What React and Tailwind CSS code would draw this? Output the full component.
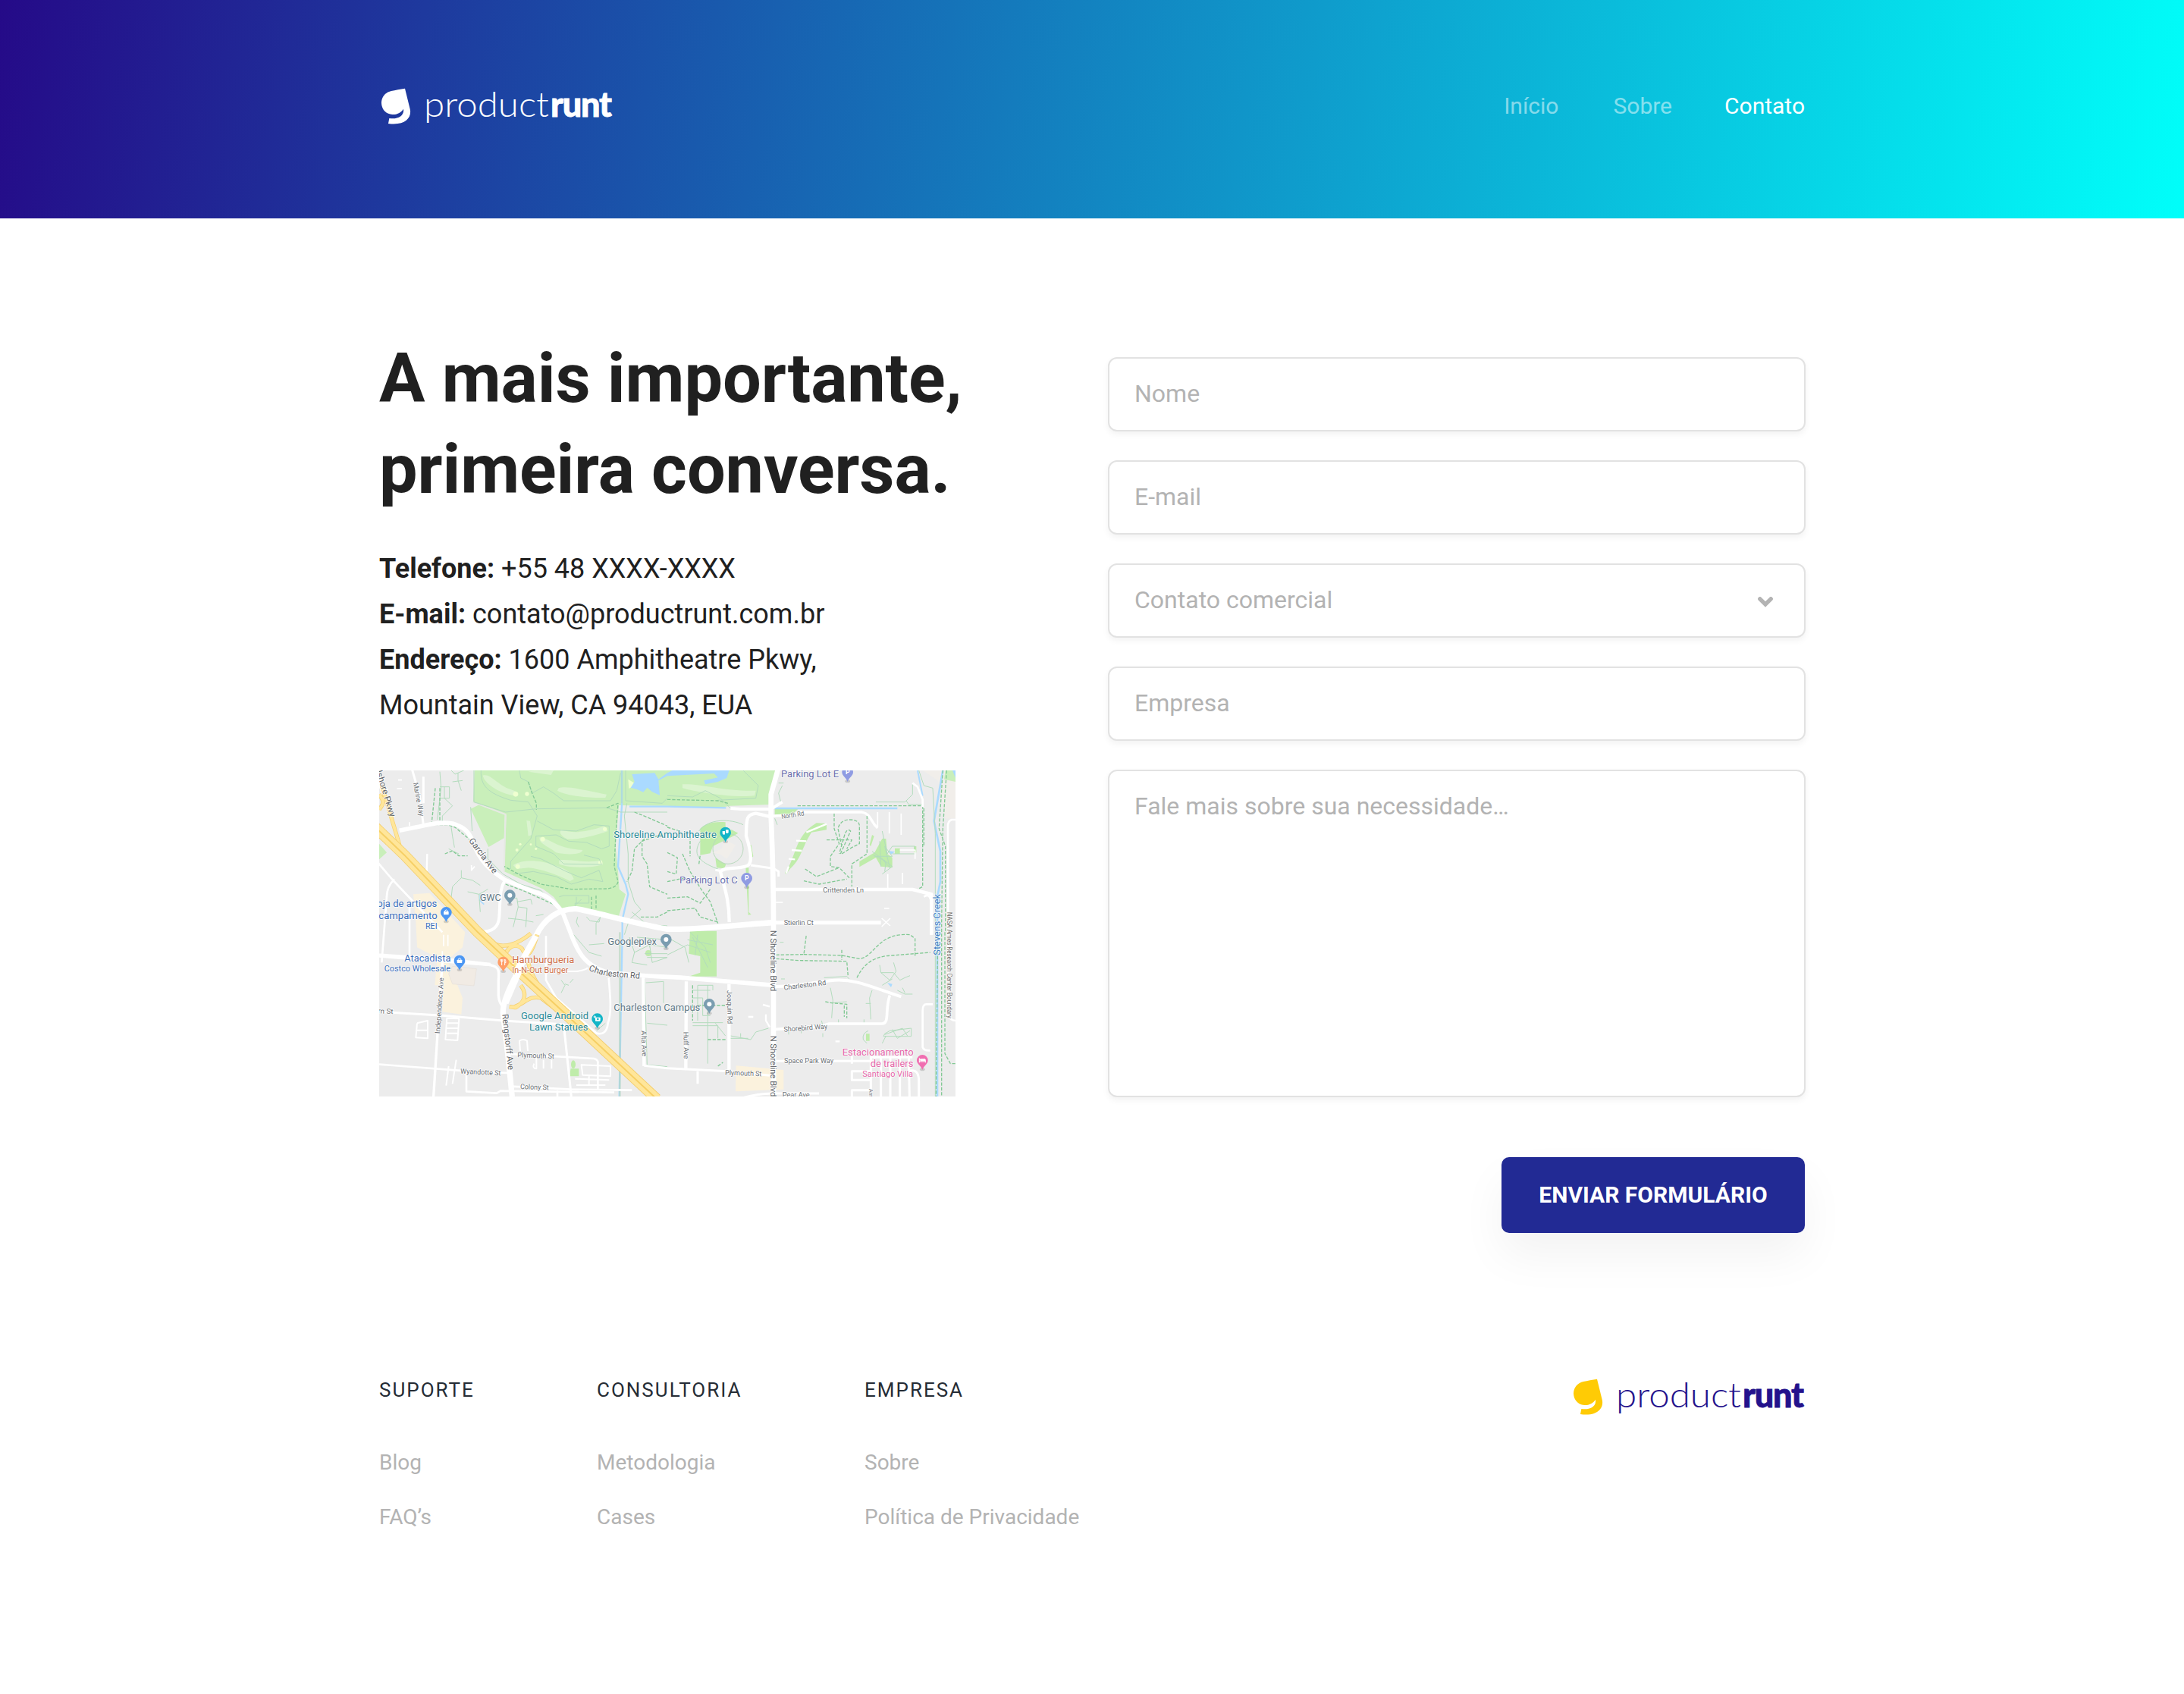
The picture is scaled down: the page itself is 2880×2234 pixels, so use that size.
import React from "react";

function Logo({ mark, word }) {
  return (
    <svg width="308" height="60" viewBox="10 10 308 60" className="block overflow-visible" role="img" aria-label="productrunt">
      <path
        transform="translate(-2 -2) scale(0.33333)"
        fill={mark}
        d="M138 56 L158 137 C166 172 139 204 72 195 L76 174 C110 179 136 165 132 137 C122 152 105 160 88 159 C60 158 45 135 45 112 C46 88 62 71 84 66 C100 62 120 59 138 56 Z"
      />
      <text x="69" y="54" textLength="165" lengthAdjust="spacingAndGlyphs" fontFamily="Lato" fontWeight="300" fontSize="45" fill={word}>product</text>
      <text x="236" y="54" textLength="81" lengthAdjust="spacing" fontFamily="Lato" fontWeight="900" fontSize="45" fill={word} stroke={word} strokeWidth="0.8">runt</text>
    </svg>
  );
}

const whiteRoads = [
  [10, "M-5 735 L440 770 C475 778 475 790 472 830 V890 Q474 920 490 935"],
  [14, "M-20 730 L260 748 L440 768"],
  [17, "M80 238 L160 222 C230 206 260 205 290 210 C340 225 355 245 370 280 C400 370 450 400 495 432 L610 480 C660 490 690 515 725 560 L760 650 C790 730 820 770 890 795 C960 810 1100 815 1200 820 L1560 850"],
  [22, "M526 1290 L512 1150 L490 960 C488 930 510 870 545 805 L620 655 C650 590 710 545 780 548 C860 560 980 600 1140 628 C1250 632 1400 612 1560 602"],
  [13, "M-10 20 C30 130 60 230 88 310 C110 360 150 410 200 460 L400 640"],
  [12, "M500 430 C475 470 480 500 475 580 C472 620 450 638 400 640"],
  [9, "M130 -5 L160 100 L175 215 M175 130 V25"],
  [7, "M190 330 L188 400 L175 410 M200 425 L215 455"],
  [8, "M-5 365 L55 435 L250 640 M60 430 Q30 460 30 500 L10 760 M120 540 V760"],
  [10, "M250 760 L240 900 L215 1290"],
  [9, "M0 955 L250 970 L490 990 L700 1003 L730 1005 L760 1290"],
  [8, "M0 1163 L350 1190 L510 1197 M345 1195 V1270 L465 1277 L480 1268 L930 1274 M520 1250 L760 1262 L1000 1265"],
  [8, "M520 1122 L850 1140 Q868 1145 865 1160 V1260 M705 1265 V1295"],
  [8, "M660 655 V830 L700 900 L860 1040 Q900 1050 905 1000 C920 960 915 900 908 820"],
  [6, "M660 795 L780 795 Q820 790 825 780"],
  [6, "M150 1000 L192 990 V1060 L145 1057 L150 1000 M145 1028 H192 M268 980 L262 1065 L310 1068 L316 982 Z M268 1000 H315 M268 1020 H315 M268 1040 H315"],
  [6, "M265 1247 L275 1170 M290 1240 L305 1145 M558 1110 L555 1070 Q570 1060 585 1070 L588 1110 M613 1160 Q605 1180 622 1180 V1135 M650 1180 V1145 M682 1180 V1145"],
  [6, "M800 1165 L915 1170 V1210 L805 1205 Z M775 1220 L910 1225 M780 1245 H895 M830 1205 V1245"],
  [13, "M1045 820 L1048 1170 M1215 835 L1213 1180 M1384 845 V1190"],
  [9, "M1048 1168 L1140 1178 L1380 1190 L1545 1207 M1260 1190 V1240"],
  [20, "M1578 -5 L1550 95 V180 C1554 280 1560 400 1560 600 V1290"],
  [12, "M1390 150 L1430 153 H1550 L1595 125"],
  [13, "M1555 185 L1490 170 C1455 175 1452 185 1452 260 C1475 330 1475 370 1455 378 C1410 393 1370 380 1350 400 C1360 450 1385 500 1385 600"],
  [9, "M1330 394 L1355 398 M1470 375 L1560 388 L1580 400 V420"],
  [10, "M1560 180 L1640 176 L1660 165 H1910 C1950 175 1940 200 1972 228"],
  [8, "M2110 50 L2130 65 L2150 115 V145 M2155 500 Q2180 480 2185 530 V650"],
  [14, "M1560 471 H2110 L2185 490 V650"],
  [15, "M1560 602 H1985"],
  [5, "M1972 165 V225 M2018 165 V250 M2065 170 V255 M2012 410 V465 M2070 405 V450 M2060 315 H2120 V350 M1560 522 H1597 M1988 585 L2022 615 M2022 585 L1988 618 M1998 546 H2018"],
  [12, "M1560 855 C1640 855 1720 838 1800 830 C1880 825 1930 850 2065 895"],
  [11, "M1560 1025 L1750 1012 L1780 1002 H1990 C2020 1000 2000 950 2020 890"],
  [9, "M1570 1150 H1960"],
  [7, "M1518 927 L1545 934 M1530 965 V990 L1545 1015 M1460 975 H1480 M1805 1072 H1822"],
  [9, "M1870 1130 V1160 M1870 1190 H1945 V1225 H1870 Z M1945 1130 V1290 M1985 1130 V1290 M2022 1130 V1290 M2060 1130 V1290 M2095 1130 L2098 1290 M1945 1135 H2110 M2100 1188 Q2135 1180 2135 1230 V1290 M1870 1290 V1265 H1945"],
  [8, "M2190 925 H2165 Q2150 925 2150 950 V1095 Q2155 1110 2180 1108 M2280 195 H2265 Q2250 200 2250 220 L2252 970 Q2260 990 2280 990"],
  [9, "M1440 1295 Q1500 1278 1560 1278 H1740"],
  [5, "M255 650 V695 M272 650 V695 M250 715 V740 M20 75 H35 M75 38 H90 M70 72 H90 M365 375 V395 L378 380 M120 205 V220"],
];

const paths = [
  "M240 5 L245 70 L230 195 M240 65 H278 V110 H240 M258 65 V110 L290 140 L250 180 V205",
  "M285 0 L300 15 L335 0 M312 10 V40 L325 80 M290 45 L330 40",
  "M362 145 L368 240 M375 0 V125 L500 165 M500 165 L620 152 L900 148 L955 165 H1140",
  "M403 0 C400 60 430 90 520 118 L590 125 L625 180 L600 270 L520 360 V390 M555 0 L560 30 L590 45 L605 90 L650 65 L690 90 L730 120 H915 L940 80 L955 10",
  "M625 200 L690 235 L780 240 L850 215 L910 220 V300 L880 310 L820 285 L750 280 L700 255 L620 260 V300 L690 330 L730 370 L880 372 L870 350 L810 335",
  "M530 410 L610 400 L700 420 L760 450 L830 430 L885 440 L870 395 L800 425 L740 400 L640 350 L600 340",
  "M285 225 L290 260 L298 305 M275 310 L290 318 L315 330 M325 395 V425 L290 460 L283 520 M325 425 L370 435 L400 455 M350 480 L395 490 L400 560 M395 490 L430 470",
  "M430 310 V350 L490 410 L560 450 L640 475 L700 530 M520 505 H545 L550 540 L530 620 M545 520 L600 510 L605 530 M550 540 L585 545 L580 620 M510 585 L560 590 L610 600 M620 575 L650 570",
  "M712 500 L730 495 H830 V525 H775 V540 M780 500 V530 L800 510 M785 580 L780 600 L790 620 M820 580 L835 595 L870 600 L875 580 L858 605 V650",
  "M960 0 V130 M975 0 V120 L1120 130 L1140 110 M985 440 L985 330 L970 180 L980 130 M985 440 L1010 520 L1035 550 L990 590 L970 650",
  "M1140 100 L1240 105 L1290 80 L1350 110 L1390 150 M1440 0 L1500 60 L1490 110 L1340 118 M1000 560 L1060 610 L1140 615",
  "M1265 240 C1300 190 1390 190 1440 215 M1270 280 C1240 330 1260 360 1340 390 M1595 60 L1580 90 L1590 130 M1565 190 L1575 215 M1600 50 H1580",
  "M1965 125 H2080 L2110 95 V55 M2085 120 L2095 135 H2150 M2155 60 L2190 70 L2200 250 V1290 M2155 60 L2135 0",
  "M1950 320 L2030 380 L1990 410 M1990 240 L2010 330 L2030 300 H2120 V330 H2030 M1960 340 H2030 L2000 300 L2020 385 L1985 345 M2000 400 L2005 360 L1955 335 M1980 280 L1985 380",
  "M990 660 L1010 720 L1000 760 L1060 770 M1010 720 L1070 690 L1140 700 M1070 690 L1080 760 L1140 740 M1020 660 L1140 670 M1030 665 V690 M1050 665 V690 M1070 670 V700 M1060 740 H1140 M1050 725 H1140",
  "M1140 730 L1220 690 L1310 720 M1140 660 L1210 700 L1225 760 M1230 640 L1290 700 L1310 760 M1240 660 L1300 780 M1260 650 L1250 730 M1220 670 L1320 690",
  "M770 650 L830 720 L880 735 M830 690 L890 685 M720 830 L735 850 L720 880 M735 845 L750 850 M755 840 L768 825 M860 1030 L895 1000",
  "M1050 825 L1060 1165 L1140 1172 M1055 840 L1125 835 V920 M1060 1000 L1140 1008 M1260 990 V850 H1320 V870 M1240 870 H1310 M1240 900 H1280 V970 H1310 M1300 850 V1160 M1240 998 H1360 M1240 1010 H1340 V1060 M1330 1000 L1370 1050",
  "M1390 1050 L1470 1065 L1490 1035 L1540 1020 M1385 1060 H1460 M1430 1055 V1040",
  "M1785 860 L1795 910 L1790 980 M1790 920 L1850 915 M1950 870 L1940 900 L1945 985 M1925 922 H1945 M1760 820 L1850 815 L1860 825",
  "M1980 770 L1985 800 L2020 830 L2045 795 L2035 760 M1985 800 H2035 L2060 830 L2080 820 L2100 812 M2050 870 L2080 885 H2110 M2070 860 L2080 880 M1990 850 L2030 825",
  "M2000 1042 L2020 1030 L2105 1020 V1052 H1995 Z M2000 1045 L2070 1020 L2090 1050 M2030 1025 L2050 1060 L2100 1030 M1990 1080 L2005 1050 M1935 1030 Q1910 1040 1915 1065 L1930 1080",
  "M1620 1010 V1045 M1670 1020 V1040 M1750 990 L1755 1010 M1817 985 V1000 M1918 985 V1000 M1755 1040 V1055 M1585 680 H1600 M1590 825 H1605",
];

const dashed = [
  "M222 70 L208 205 M240 70 V200 M220 215 H270 L300 225 L360 275 M260 330 L290 318 L315 338 H350",
  "M590 45 L605 90 L622 130 V155 M900 148 L945 130 L935 270 L930 380 L945 440 Q940 465 900 468 L760 470 L640 450 L560 415 L495 380",
  "M1010 165 L1060 185 L1140 220 M1140 245 L1040 280 L1040 340 L1060 370 L1070 460 L1140 490 M1050 270 L1010 310 L1000 400 L980 440",
  "M500 450 L580 480 L690 530 M840 500 V550 M858 495 V550 M1035 580 L1100 580 L1140 560",
  "M1140 115 L1340 120 L1380 130 M1655 140 H2150 V460 L2130 470 M2155 150 V300 M1230 260 V340 M1140 225 L1190 240 M1140 325 L1180 345 L1175 410 L1140 400 M1200 330 L1230 400 L1280 480 L1310 520 L1340 605",
  "M1140 440 L1210 425 M1140 505 L1220 500 L1270 525 L1310 470 M1140 555 L1250 545 L1270 580 L1340 600 M1265 370 L1270 335",
  "M1800 170 V230 L1820 290 L1785 340 V380 L1820 385 L1860 425 M1830 300 L1815 230 Q1825 195 1860 195 Q1900 195 1900 220 V290 L1870 305 L1830 330 M1825 330 L1865 240 Q1850 225 1840 260 L1820 330 M1930 180 V330 L1870 370 V460 M1685 390 L1730 420 L1820 385 M1680 437 L1740 450 L1850 430 M1770 275 H1870 L1850 310",
  "M2230 0 L2215 230 L2240 300 V640 M2245 0 L2230 230 L2225 600 V1290 M2210 640 L2203 1290 M2238 640 V1120 L2260 1160 H2280",
  "M1570 730 L1680 728 L1690 650 M1680 728 L1830 732 L1900 745 C1960 740 1970 640 2100 650 L2120 665 V735 M1570 745 L1660 752 L1850 755 L1855 815 M1890 820 C1920 760 1960 735 2030 732 L2180 720 M1830 710 V750",
  "M1240 850 V990 M1260 930 H1370 M1300 1065 H1370 M1340 1170 L1360 1155 M1765 915 L1790 920 L1850 925 V980 M1840 930 V975",
];

function Label({ x, y, w, s = 36, fill = "#6b7075", rot = 0, children, weight = 400 }) {
  return (
    <text
      transform={`translate(${x} ${y}) rotate(${rot})`}
      textLength={w}
      lengthAdjust="spacingAndGlyphs"
      fontSize={s}
      fontWeight={weight}
      fill={fill}
      stroke="#ffffff"
      strokeWidth="5"
      strokeOpacity="0.75"
      strokeLinejoin="round"
      paintOrder="stroke"
    >
      {children}
    </text>
  );
}

function Pin({ x, y, fill, children }) {
  return (
    <g transform={`translate(${x} ${y})`}>
      <ellipse cx="0" cy="36" rx="10" ry="6" fill="#000" opacity="0.15" />
      <path d="M0 -22 A22 22 0 0 1 22 0 C22 15 7 20 0 38 C-7 20 -22 15 -22 0 A22 22 0 0 1 0 -22 Z" fill={fill} />
      {children || <circle r="9" fill="#fff" />}
    </g>
  );
}

const Bag = () => (
  <g>
    <rect x="-10" y="-4" width="20" height="13" rx="2" fill="#fff" />
    <path d="M-5 -4 V-7 Q0 -14 5 -7 V-4" fill="none" stroke="#fff" strokeWidth="3" />
  </g>
);

const PinP = () => (
  <text x="-8" y="9" fontSize="26" fontWeight="700" fill="#fff">P</text>
);

function Map() {
  return (
    <svg className="block mt-14" width="760" height="430" viewBox="0 0 2280 1290" fontFamily="Roboto, sans-serif" fill="none" strokeLinecap="butt" strokeLinejoin="round">
      <rect width="2280" height="1290" fill="#ececec" />
      <path d="M2150 0 H2280 V190 L2240 190 L2210 40 Z" fill="#f1eeea" />
      <g fill="#c9efba">
        <path d="M378 0 H1580 L1550 92 V135 L1390 140 L1330 150 L1140 140 L948 138 L935 300 L945 400 L950 470 L975 490 L948 575 L725 548 L690 500 L650 470 L495 400 L503 176 L372 124 Z" />
        <path d="M362 152 L395 136 L497 175 L494 268 L433 303 Z" />
        <path d="M0 290 L30 325 L0 352 Z M2240 0 H2280 V45 L2235 35 Z" />
      </g>
      <path d="M370 125 L500 174 L494 400" stroke="#e6e9e3" strokeWidth="6" />
      <g fill="#dbf4d0">
        <path d="M410 20 C440 10 470 60 520 75 L545 85 L540 100 C490 95 420 60 410 20 Z" />
        <path d="M710 70 C740 60 800 75 900 95 L895 108 C830 110 740 100 705 80 Z M590 5 C620 0 660 5 690 0 L680 18 Z" />
        <path d="M720 235 C780 255 850 235 890 220 L905 240 C850 260 780 275 745 272 C720 260 710 245 720 235 Z" />
        <path d="M635 265 C680 270 700 310 805 315 C800 335 740 335 700 325 C670 300 630 290 635 265 Z M712 355 C760 350 820 370 880 355 L885 372 C830 390 740 385 712 370 Z" />
        <path d="M530 375 C570 350 640 355 690 375 C730 385 760 400 770 430 L755 438 C700 410 640 390 590 385 L545 390 Z M583 198 L597 200 L605 255 L590 260 Z" />
        <path d="M1200 55 C1260 50 1380 85 1490 80 L1485 100 C1400 110 1250 85 1200 70 Z" />
      </g>
      <g fill="#efffd0">
        <circle cx="540" cy="94" r="10" /><circle cx="585" cy="93" r="8" /><circle cx="548" cy="380" r="9" /><circle cx="647" cy="272" r="9" /><circle cx="893" cy="232" r="8" /><circle cx="875" cy="365" r="8" /><circle cx="558" cy="292" r="5" /><circle cx="545" cy="315" r="6" /><circle cx="600" cy="293" r="4" /><circle cx="620" cy="310" r="5" /><path d="M985 35 L1010 50 L1000 65 L988 72 Z" />
      </g>
      <g fill="#aadaff">
        <path d="M1000 15 L1090 10 L1105 35 L1140 10 L1160 0 H1385 L1375 30 L1340 45 L1290 55 L1285 40 L1340 28 L1325 12 L1140 22 L1105 40 L1110 98 L1080 85 L1060 68 L1045 86 L1020 75 L995 68 L1010 45 Z" />
        <path d="M2015 318 L2040 322 L2025 332 Z M2010 840 L2030 845 L2025 858 Z M2268 0 H2280 V30 Z" />
      </g>
      <g fill="#fbf2dd">
        <path d="M135 490 L200 485 L340 640 L330 700 L270 750 L330 900 L325 965 L250 955 L255 850 L220 850 L230 740 L150 700 L145 600 Z" />
        <path d="M1412 1168 L1600 1185 V1262 L1410 1270 Z" />
      </g>
      <path d="M290 775 L385 785 L375 852 L290 845 L275 805 Z" fill="#f1ebe4" stroke="#e6e0d8" strokeWidth="2" />
      <g fill="#bfecaa">
        <path d="M1270 230 C1290 210 1330 200 1370 205 V240 L1395 235 L1420 248 L1400 260 L1320 300 L1310 328 L1270 335 Z M1330 345 L1372 372 L1365 388 L1335 385 Z" />
        <path d="M1450 385 H1462 V560 L1472 570 L1460 572 Z M1463 295 H1472 L1480 340 L1470 350 Z" />
        <path d="M1605 405 C1650 350 1640 260 1730 208 L1770 210 V235 L1710 245 C1670 310 1670 350 1625 390 L1610 410 Z M1565 150 H1660 L1625 182 L1565 180 Z" />
        <path d="M1900 360 L1960 325 L1990 270 L2005 270 L2010 330 L2030 345 V385 L1985 380 L1965 345 L1900 382 Z M1940 295 L1950 255 L1958 260 L1945 300 Z M2040 308 H2060 V330 H2040 Z M2115 300 H2125 V325 H2115 Z" />
        <path d="M1230 635 H1335 V815 H1225 L1270 800 V735 L1225 725 Z" />
        <path d="M758 1180 H790 V1210 H752 Z M1926 1042 H1940 V1070 H1926 Z" />
        <ellipse cx="768" cy="1163" rx="9" ry="16" /><circle cx="1065" cy="723" r="12" />
      </g>
      <g fill="#f1eeea" stroke="#b9d9bd" strokeWidth="3">
        <circle cx="1380" cy="310" r="60" fill="none" />
        <path d="M1320 325 L1355 310 L1365 275 L1410 295 L1395 320 L1375 350 L1350 332 Z" stroke="none" />
      </g>
      <g stroke="#aadaff">
        <path d="M960 0 V140 L945 380 L975 450 L985 490 L962 590 V645 L950 1290" strokeWidth="7" />
        <path d="M990 143 H1140 L1372 148 M1565 150 H2050" strokeWidth="7" />
        <path d="M2130 0 L2150 100" strokeWidth="6" />
        <path d="M2230 0 L2195 200 L2220 320 V440 L2208 500 V1290" strokeWidth="8" />
        <path d="M400 490 L398 515 L415 530" strokeWidth="5" />
      </g>
      <path d="M952 640 V1290" stroke="#b4d6bd" strokeWidth="8" opacity="0.6" />
      <g stroke="#b3dcbd" strokeWidth="3">
        {paths.map((d) => <path key={d} d={d} />)}
      </g>
      <g stroke="#83c995" strokeWidth="4" strokeDasharray="13 6">
        {dashed.map((d) => <path key={d} d={d} />)}
      </g>
      <g stroke="#ffffff">
        {whiteRoads.map(([w, d]) => <path key={d} d={d} strokeWidth={w} />)}
      </g>
      <path d="M1610 407 L1620 380 M1620 350 L1645 352 M1632 315 L1672 318 M1650 278 L1690 280 M1690 245 L1770 212" stroke="#fff" strokeWidth="7" />
      <g>
        {[["#f3cd6c", 16], ["#ffe69a", 12]].map(([c, w]) => (
          <path key={c} stroke={c} strokeWidth={w} d="M400 640 C450 710 520 710 600 645 M500 740 C500 700 540 680 565 705 C580 740 600 740 625 650 M590 760 C600 820 650 880 720 960 M560 850 C590 890 570 920 540 938 L515 935 M530 938 C580 920 590 890 640 900 C680 930 700 950 760 990 M0 95 C20 120 20 130 0 155 M10 60 L85 310" />
        ))}
        <path d="M-15 225 L100 335 L390 640 L560 800 L760 985 L1098 1300" stroke="#f3cd6c" strokeWidth="43" />
        <path d="M-15 225 L100 335 L390 640 L560 800 L760 985 L1098 1300" stroke="#ffe69a" strokeWidth="38" />
        <path d="M-15 225 L100 335 L390 640 L560 800 L760 985 L1098 1300" stroke="#f6cf65" strokeWidth="6" />
      </g>
      <path d="M545 790 L620 655" stroke="#fff" strokeWidth="24" />
      <path d="M500 920 L560 780" stroke="#fff" strokeWidth="24" />

      <Label x={-12} y={4} w={190} rot={73} fill="#5f6468" s={34}>lshore Pkwy</Label>
      <Label x={134} y={50} w={135} rot={79} s={28}>Marine Way</Label>
      <Label x={353} y={278} w={165} rot={53} s={34} fill="#5f6468">García Ave</Label>
      <Label x={398} y={517} w={84} s={38} fill="#607886">GWC</Label>
      <Label x={-8} y={541} w={237} s={38} fill="#3b6fbd">oja de artigos</Label>
      <Label x={-2} y={587} w={232} s={38} fill="#3b6fbd">campamento</Label>
      <Label x={183} y={627} w={47} s={32} fill="#3b6fbd">REI</Label>
      <Label x={928} y={268} w={407} s={38} fill="#1f8796">Shoreline Amphitheatre</Label>
      <Label x={1590} y={28} w={228} s={38} fill="#6b70ae">Parking Lot E</Label>
      <Label x={1188} y={448} w={230} s={38} fill="#6b70ae">Parking Lot C</Label>
      <Label x={1593} y={192} w={90} rot={-9} s={26}>North Rd</Label>
      <Label x={1756} y={482} w={161} s={28}>Crittenden Ln</Label>
      <Label x={1601} y={613} w={117} s={28}>Stierlin Ct</Label>
      <Label x={2219} y={731} w={242} rot={-90} s={38} fill="#3b7cc4">Stevens Creek</Label>
      <Label x={2246} y={560} w={420} rot={90} s={27} fill="#6b6964">NASA Ames Research Center Boundary</Label>
      <Label x={100} y={756} w={183} s={38} fill="#3b6fbd">Atacadista</Label>
      <Label x={20} y={795} w={262} s={32} fill="#3b6fbd">Costco Wholesale</Label>
      <Label x={526} y={762} w={246} s={38} fill="#cf6f48">Hamburgueria</Label>
      <Label x={526} y={801} w={222} s={32} fill="#cf6f48">In-N-Out Burger</Label>
      <Label x={904} y={691} w={194} s={38} fill="#607886">Googleplex</Label>
      <Label x={828} y={792} w={70} s={34} rot={17} fill="#5f6468">Char</Label>
      <Label x={897} y={813} w={134} s={34} rot={5} fill="#5f6468">leston Rd</Label>
      <Label x={928} y={950} w={342} s={38} fill="#607886">Charleston Campus</Label>
      <Label x={561} y={983} w={267} s={38} fill="#1f8796">Google Android</Label>
      <Label x={594} y={1028} w={232} s={38} fill="#1f8796">Lawn Statues</Label>
      <Label x={-5} y={961} w={60} s={28} rot={2}>rn St</Label>
      <Label x={240} y={1042} w={222} rot={-86} s={28}>Independence Ave</Label>
      <Label x={487} y={965} w={222} rot={84} s={34} fill="#5f6468">Rengstorff Ave</Label>
      <Label x={547} y={1135} w={145} rot={2} s={28}>Plymouth St</Label>
      <Label x={321} y={1199} w={160} rot={3} s={28}>Wyandotte St</Label>
      <Label x={558} y={1260} w={113} rot={2} s={28}>Colony St</Label>
      <Label x={1037} y={1030} w={102} rot={88} s={28}>Alta Ave</Label>
      <Label x={1204} y={1034} w={107} rot={89} s={28}>Huff Ave</Label>
      <Label x={1376} y={870} w={133} rot={89} s={28}>Joaquin Rd</Label>
      <Label x={1549} y={632} w={242} rot={90} s={34} fill="#5f6468">N Shoreline Blvd</Label>
      <Label x={1549} y={1049} w={242} rot={90} s={34} fill="#5f6468">N Shoreline Blvd</Label>
      <Label x={1602} y={869} w={168} rot={-7} s={28}>Charleston Rd</Label>
      <Label x={1601} y={1034} w={173} rot={-4} s={28}>Shorebird Way</Label>
      <Label x={1602} y={1158} w={195} s={28}>Space Park Way</Label>
      <Label x={1368} y={1205} w={145} rot={2} s={28}>Plymouth St</Label>
      <Label x={1595} y={1294} w={108} s={28}>Pear Ave</Label>
      <Label x={1938} y={1260} w={40} rot={90} s={24}>Arm</Label>
      <Label x={1832} y={1129} w={282} s={38} fill="#e667a9">Estacionamento</Label>
      <Label x={1943} y={1173} w={170} s={38} fill="#e667a9">de trailers</Label>
      <Label x={1912} y={1213} w={200} s={32} fill="#e667a9">Santiago Villa</Label>

      <Pin x={517} y={494} fill="#7a9db0" />
      <Pin x={1135} y={669} fill="#7a9db0" />
      <Pin x={1306} y={925} fill="#7a9db0" />
      <Pin x={265} y={562} fill="#4b96f3"><Bag /></Pin>
      <Pin x={318} y={753} fill="#4b96f3"><Bag /></Pin>
      <Pin x={1853} y={7} fill="#8f9be2"><PinP /></Pin>
      <Pin x={1454} y={427} fill="#8f9be2"><PinP /></Pin>
      <Pin x={1370} y={246} fill="#14b5c7">
        <path d="M-12 -6 H-2 V6 Q-7 12 -12 4 Z M1 -11 H12 V0 Q7 6 1 0 Z" fill="#fff" />
      </Pin>
      <Pin x={863} y={983} fill="#14b5c7">
        <rect x="-8" y="-6" width="20" height="15" rx="2" fill="#fff" />
        <circle cx="2" cy="1" r="4" fill="#14b5c7" />
        <path d="M-10 -13 V-3 M-15 -8 H-5" stroke="#fff" strokeWidth="3" />
      </Pin>
      <Pin x={491} y={759} fill="#ff9e67">
        <path d="M-6 -12 V12 M-10 -12 V-4 H-2 V-12 M6 12 V-12 Q11 -8 10 2 H6" stroke="#fff" strokeWidth="3" />
      </Pin>
      <Pin x={2149} y={1147} fill="#f06eb0">
        <path d="M-12 -9 V9 M-12 5 H12 V9 M12 5 V-3 H-12" stroke="#fff" strokeWidth="3" />
        <rect x="-9" y="-6" width="20" height="9" fill="#fff" />
      </Pin>
    </svg>
  );
}

const field =
  "block w-full rounded-[12px] border-2 border-[#e2e2e2] bg-white pl-[33px] pr-8 text-[32px] text-[#b3b3b3] shadow-[0_4px_8px_rgba(0,0,0,0.05)] outline-none placeholder:text-[#b3b3b3] placeholder:opacity-100";

function FooterColumn({ title, links, className }) {
  return (
    <div className={className}>
      <h2 className="text-[26px] leading-8 tracking-[2px] text-[#252c35]">{title}</h2>
      <ul className="mt-11">
        {links.map((l) => (
          <li key={l} className="text-[28px] leading-[72px] text-[#b3b3b3] whitespace-nowrap">{l}</li>
        ))}
      </ul>
    </div>
  );
}

export default function App() {
  return (
    <div className="min-h-[2234px] w-[2880px] bg-white font-['Roboto',sans-serif] text-[#202020]">
      <header className="h-72 bg-[linear-gradient(100deg,#250a88,#00fffa)]">
        <div className="mx-auto flex h-full w-[1880px] items-center justify-between pb-2">
          <Logo mark="#ffffff" word="#ffffff" />
          <nav className="flex text-[30px] leading-9 text-white">
            <a className="mr-[72px] opacity-50">Início</a>
            <a className="mr-[69px] opacity-50">Sobre</a>
            <a>Contato</a>
          </nav>
        </div>
      </header>

      <main className="mx-auto flex w-[1880px] justify-between pt-[152px]">
        <section className="w-[840px]">
          <h1 className="text-[90px] leading-[120px] font-bold tracking-[-0.08px] whitespace-nowrap">
            A mais importante,
            <br />
            primeira conversa.
          </h1>
          <p className="mt-10 text-[36px] leading-[60px]">
            <b>Telefone:</b> +55 48 XXXX-XXXX
            <br />
            <b>E-mail:</b> contato@productrunt.com.br
            <br />
            <b>Endereço:</b> 1600 Amphitheatre Pkwy,
            <br />
            Mountain View, CA 94043, EUA
          </p>
          <Map />
        </section>

        <form className="-mr-px mt-[31px] flex w-[920px] flex-col gap-[38px]">
          <input className={`${field} h-[98px] pb-0.5`} placeholder="Nome" />
          <input className={`${field} h-[98px] pb-0.5`} placeholder="E-mail" />
          <div className={`${field} flex h-[98px] items-center justify-between pb-0.5`}>
            <span>Contato comercial</span>
            <svg width="20" height="14" viewBox="0 0 20 14" className="mr-[9px] mt-1.5">
              <path d="M2.8 2.8 L10 10 L17.2 2.8" fill="none" stroke="#b3b3b3" strokeWidth="5.4" strokeLinecap="round" />
            </svg>
          </div>
          <input className={`${field} h-[98px] pb-0.5`} placeholder="Empresa" />
          <textarea className={`${field} h-[432px] resize-none pt-[27px] leading-[38px]`} placeholder="Fale mais sobre sua necessidade…" />
          <button type="button" className="mt-[41px] mr-px h-[100px] w-[400px] self-end rounded-[10px] bg-[#222a94] pb-0.5 text-[30px] font-bold text-white shadow-[0_30px_60px_rgba(0,0,0,0.05)]">
            ENVIAR FORMULÁRIO
          </button>
        </form>
      </main>

      <footer className="mx-auto flex w-[1880px] pt-[191px]">
        <FooterColumn className="w-[287px]" title="SUPORTE" links={["Blog", "FAQ’s"]} />
        <FooterColumn className="w-[353px]" title="CONSULTORIA" links={["Metodologia", "Cases"]} />
        <FooterColumn title="EMPRESA" links={["Sobre", "Política de Privacidade"]} />
        <div className="ml-auto -mt-[5px]">
          <Logo mark="#ffcb05" word="#24128c" />
        </div>
      </footer>
    </div>
  );
}
